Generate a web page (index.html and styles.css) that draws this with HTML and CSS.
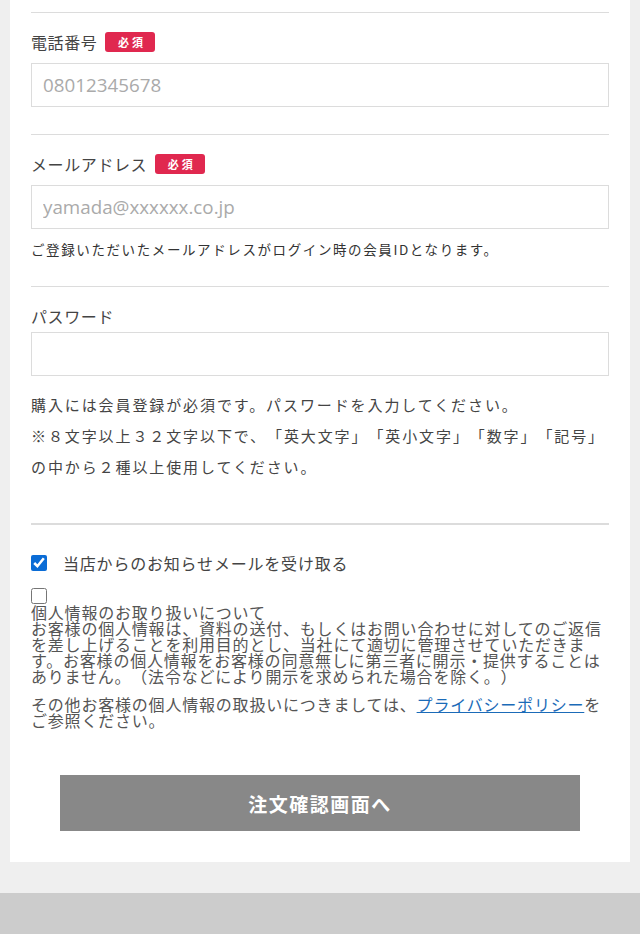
FILE: index.html
```html
<!DOCTYPE html>
<html lang="ja">
<head>
<meta charset="utf-8">
<title>会員情報入力</title>
<link rel="stylesheet" href="styles.css">
</head>
<body>
<div class="page">
  <main class="card">
    <section class="field">
      <div class="label-row"><span class="label">電話番号</span><span class="badge">必須</span></div>
      <input class="input" type="text" placeholder="08012345678">
    </section>
    <section class="field">
      <div class="label-row"><span class="label">メールアドレス</span><span class="badge">必須</span></div>
      <input class="input" type="text" placeholder="yamada@xxxxxx.co.jp">
      <p class="note">ご登録いただいたメールアドレスがログイン時の会員IDとなります。</p>
    </section>
    <section class="field field-pass">
      <div class="label-row label-row-plain"><span class="label">パスワード</span></div>
      <input class="input" type="password">
      <div class="help">
        <p>購入には会員登録が必須です。パスワードを入力してください。</p>
        <p>※８文字以上３２文字以下で、「英大文字」「英小文字」「数字」「記号」</p>
        <p>の中から２種以上使用してください。</p>
      </div>
    </section>
    <section class="agree">
      <label class="check-row"><input class="check" type="checkbox" checked><span>当店からのお知らせメールを受け取る</span></label>
      <div class="policy">
        <input class="check check-plain" type="checkbox">
        <p class="policy-text">個人情報のお取り扱いについて<br>お客様の個人情報は、資料の送付、もしくはお問い合わせに対してのご返信を差し上げることを利用目的とし、当社にて適切に管理させていただきます。お客様の個人情報をお客様の同意無しに第三者に開示・提供することはありません。（法令などにより開示を求められた場合を除く。）</p>
        <p class="policy-text policy-more">その他お客様の個人情報の取扱いにつきましては、<a href="#" class="link">プライバシーポリシー</a>をご参照ください。</p>
      </div>
      <div class="actions">
        <button class="submit" type="button">注文確認画面へ</button>
      </div>
    </section>
  </main>
  <div class="spacer"></div>
  <footer class="footer-bar"></footer>
</div>
</body>
</html>
```

FILE: styles.css
```css
* { box-sizing: border-box; }
html, body { margin: 0; padding: 0; }
body {
  background: #efefef;
  font-family: "Noto Sans CJK JP", "Noto Sans", sans-serif;
  color: #333;
  text-spacing-trim: space-all;
}
.page {
  display: flex;
  flex-direction: column;
  min-height: 934px;
}
.card {
  background: #fff;
  margin: 0 10px;
  padding: 12px 21px 31px;
}
.field {
  border-top: 1px solid #dcdcdc;
  padding: 18px 0 27px;
}
.label-row {
  display: flex;
  align-items: center;
  gap: 8px;
  height: 22px;
  margin-bottom: 10px;
}
.label-row-plain { margin-bottom: 5px; }
.label {
  font-size: 16px;
  letter-spacing: 0.6px;
  color: #444;
}
.badge {
  background: #e0284f;
  color: #fff;
  font-size: 11px;
  font-weight: bold;
  letter-spacing: 3px;
  padding: 0 5px 0 8px;
  height: 20px;
  line-height: 20px;
  border-radius: 3px;
  width: 50px;
  text-align: center;
}
.input {
  display: block;
  width: 100%;
  height: 44px;
  border: 1px solid #dcdcdc;
  border-radius: 0;
  padding: 0 11px;
  font-family: "Open Sans", "Noto Sans CJK JP", sans-serif;
  font-size: 18.8px;
  color: #333;
  background: #fff;
  outline: none;
}
.input::placeholder { color: #aaa; }
.note {
  margin: 10px 0 0;
  font-size: 13.5px;
  letter-spacing: 1.6px;
  line-height: 20px;
  color: #333;
}
.field-pass { padding-bottom: 41px; }
.help {
  margin-top: 13px;
}
.help p {
  margin: 0;
  font-size: 15px;
  letter-spacing: 1.9px;
  line-height: 31px;
  color: #444;
}
.agree {
  border-top: 2px solid #dcdcdc;
  padding-top: 29px;
}
.check-row {
  display: flex;
  align-items: center;
  gap: 16px;
  font-size: 16px;
  letter-spacing: 0.8px;
  color: #444;
  height: 18px;
}
.check {
  width: 16px;
  height: 16px;
  margin: 0;
  accent-color: #0a6cd6;
}
.policy {
  margin-top: 16px;
}
.check-plain {
  display: block;
}
.policy-text {
  margin: 0;
  font-size: 16px;
  letter-spacing: 0.8px;
  line-height: 16px;
  color: #555;
}
.policy-more {
  margin-top: 12px;
}
.link {
  color: #1b6bb8;
  text-decoration: underline;
}
.actions {
  margin-top: 47px;
  display: flex;
  justify-content: center;
}
.submit {
  width: 90%;
  height: 56px;
  border: none;
  background: #888;
  color: #fff;
  font-family: "Noto Sans CJK JP", sans-serif;
  font-weight: bold;
  font-size: 19px;
  letter-spacing: 1.5px;
  cursor: pointer;
}
.spacer {
  height: 31px;
}
.footer-bar {
  flex: 1;
  background: #ccc;
  min-height: 41px;
}
```
